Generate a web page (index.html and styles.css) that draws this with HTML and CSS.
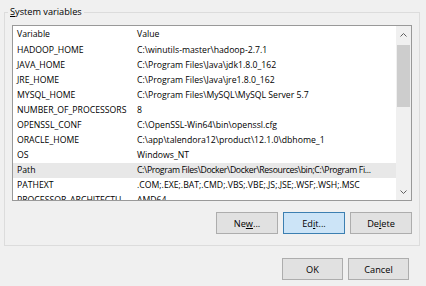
FILE: index.html
```html
<!DOCTYPE html>
<html lang="en">
<head>
    <meta charset="UTF-8">
    <title>Environment Variables</title>
    <link rel="stylesheet" href="styles.css">
</head>
<body>
    <div class="dialog">
        <fieldset class="group">
            <legend><u>S</u>ystem variables</legend>
            <div class="listbox">
                <div class="rows">
                    <div class="row head"><span class="name">Variable</span><span class="value">Value</span></div>
                    <div class="row"><span class="name">HADOOP_HOME</span><span class="value">C:\winutils-master\hadoop-2.7.1</span></div>
                    <div class="row"><span class="name">JAVA_HOME</span><span class="value">C:\Program Files\Java\jdk1.8.0_162</span></div>
                    <div class="row"><span class="name">JRE_HOME</span><span class="value">C:\Program Files\Java\jre1.8.0_162</span></div>
                    <div class="row"><span class="name">MYSQL_HOME</span><span class="value">C:\Program Files\MySQL\MySQL Server 5.7</span></div>
                    <div class="row"><span class="name">NUMBER_OF_PROCESSORS</span><span class="value">8</span></div>
                    <div class="row"><span class="name">OPENSSL_CONF</span><span class="value">C:\OpenSSL-Win64\bin\openssl.cfg</span></div>
                    <div class="row"><span class="name">ORACLE_HOME</span><span class="value">C:\app\talendora12\product\12.1.0\dbhome_1</span></div>
                    <div class="row"><span class="name">OS</span><span class="value">Windows_NT</span></div>
                    <div class="row hover"><span class="name">Path</span><span class="value long">C:\Program Files\Docker\Docker\Resources\bin;C:\Program Fi...</span></div>
                    <div class="row"><span class="name">PATHEXT</span><span class="value">.COM;.EXE;.BAT;.CMD;.VBS;.VBE;.JS;.JSE;.WSF;.WSH;.MSC</span></div>
                    <div class="row"><span class="name">PROCESSOR_ARCHITECTU</span><span class="value">AMD64</span></div>
                </div>
                <div class="scrollbar">
                    <div class="arrow">
                        <svg width="7" height="4" viewBox="0 0 7 4"><path d="M0.5 3.5 L3.5 0.5 L6.5 3.5" fill="none" stroke="#606060" stroke-width="1"/></svg>
                    </div>
                    <div class="track"><div class="thumb"></div></div>
                    <div class="arrow">
                        <svg width="7" height="4" viewBox="0 0 7 4"><path d="M0.5 0.5 L3.5 3.5 L6.5 0.5" fill="none" stroke="#606060" stroke-width="1"/></svg>
                    </div>
                </div>
            </div>
            <div class="buttons">
                <button class="btn">Ne<u>w</u>...</button>
                <button class="btn focused">Ed<u>i</u>t...</button>
                <button class="btn">De<u>l</u>ete</button>
            </div>
        </fieldset>
        <div class="footer">
            <button class="btn small">OK</button>
            <button class="btn small">Cancel</button>
        </div>
    </div>
</body>
</html>
```

FILE: styles.css
```css
html, body {
    margin: 0;
    height: 100%;
    background-color: #f0f0f0;
    font-family: "Open Sans", "Noto Sans", sans-serif;
    font-size: 8.7px;
    color: #000;
}

.dialog {
    padding: 4px 6px 0 4px;
}

.group {
    margin: 0;
    min-width: 0;
    border: 1px solid #dcdcdc;
    padding: 5px 7px 11px 7px;
}

.group legend {
    padding: 0 2px;
    margin-left: -4px;
    line-height: 16px;
    font-size: 9.2px;
}

.listbox {
    display: flex;
    height: 174px;
    border: 1px solid #999;
    background: white;
    overflow: hidden;
}

.rows {
    flex: 1;
    min-width: 0;
    overflow: hidden;
}

.row {
    display: flex;
    height: 15px;
    line-height: 15px;
    white-space: nowrap;
}

.row.head {
    height: 17px;
    line-height: 17px;
}

.row.hover {
    background-color: #e8e8e8;
}

.name {
    flex: none;
    width: 116px;
    padding-left: 4px;
    overflow: hidden;
}

.value {
    padding-left: 4px;
}

.value.long {
    letter-spacing: -0.35px;
}

.scrollbar {
    flex: none;
    width: 15px;
    display: flex;
    flex-direction: column;
    background-color: #f0f0f0;
}

.arrow {
    height: 17px;
    display: flex;
    align-items: center;
    justify-content: center;
}

.track {
    flex: 1;
    padding: 2px 1px 0 1px;
}

.thumb {
    height: 62px;
    background-color: #cdcdcd;
}

.buttons {
    display: flex;
    justify-content: flex-end;
    gap: 5px;
    margin-top: 11px;
}

.btn {
    width: 62px;
    height: 22px;
    padding: 0;
    font-family: inherit;
    font-size: 9.2px;
    color: #000;
    background-color: #e1e1e1;
    border: 1px solid #adadad;
}

.btn.focused {
    background-color: #cce4f7;
    border-color: #3c7fb1;
}

.btn.small {
    width: 61px;
}

.footer {
    display: flex;
    justify-content: flex-end;
    gap: 5px;
    padding: 12px 11px 0 0;
}
```
